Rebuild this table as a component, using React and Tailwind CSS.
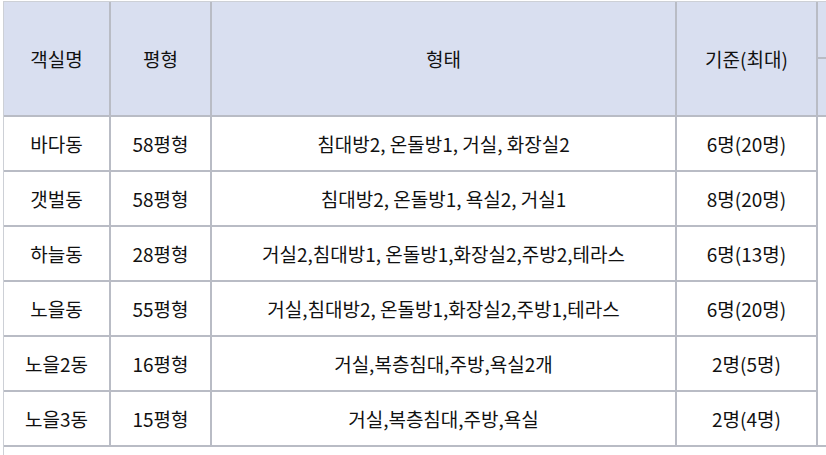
const rooms = [
  { name: '바다동', size: '58평형', type: '침대방2, 온돌방1, 거실, 화장실2', cap: '6명(20명)' },
  { name: '갯벌동', size: '58평형', type: '침대방2, 온돌방1, 욕실2, 거실1', cap: '8명(20명)' },
  { name: '하늘동', size: '28평형', type: '거실2,침대방1, 온돌방1,화장실2,주방2,테라스', cap: '6명(13명)' },
  { name: '노을동', size: '55평형', type: '거실,침대방2, 온돌방1,화장실2,주방1,테라스', cap: '6명(20명)' },
  { name: '노을2동', size: '16평형', type: '거실,복층침대,주방,욕실2개', cap: '2명(5명)' },
  { name: '노을3동', size: '15평형', type: '거실,복층침대,주방,욕실', cap: '2명(4명)' },
];

const cell = 'flex items-center justify-center border-r-2 border-b-2 border-[#b9bcc5]';

export default function App() {
  return (
    <div
      className="w-[826px] h-[455px] overflow-hidden bg-white text-[19px] leading-none text-[#111]"
      style={{ fontFamily: '"Noto Sans CJK KR", "Noto Sans", sans-serif' }}
    >
      <div className="ml-[3px] mt-[1px] w-[940px] border-l border-t border-[#cdd0d6] grid grid-cols-[107px_101px_465px_141px_120px] grid-rows-[57px_58px_repeat(7,55px)]">
        <div className={`${cell} row-span-2 bg-[#d9dff0]`}>객실명</div>
        <div className={`${cell} row-span-2 bg-[#d9dff0]`}>평형</div>
        <div className={`${cell} row-span-2 bg-[#d9dff0]`}>형태</div>
        <div className={`${cell} row-span-2 bg-[#d9dff0]`}>기준(최대)</div>
        <div className={`${cell} bg-[#d9dff0]`} />
        <div className={`${cell} bg-[#d9dff0]`} />

        {rooms.map((r, i) => (
          <div key={r.name} className="contents">
            <div className={cell}>{r.name}</div>
            <div className={cell}>{r.size}</div>
            <div className={cell}>{r.type}</div>
            <div className={cell}>{r.cap}</div>
            {i === 0 && <div className={`${cell} row-span-6`} />}
          </div>
        ))}

        <div className="col-span-5" />
      </div>
    </div>
  );
}
